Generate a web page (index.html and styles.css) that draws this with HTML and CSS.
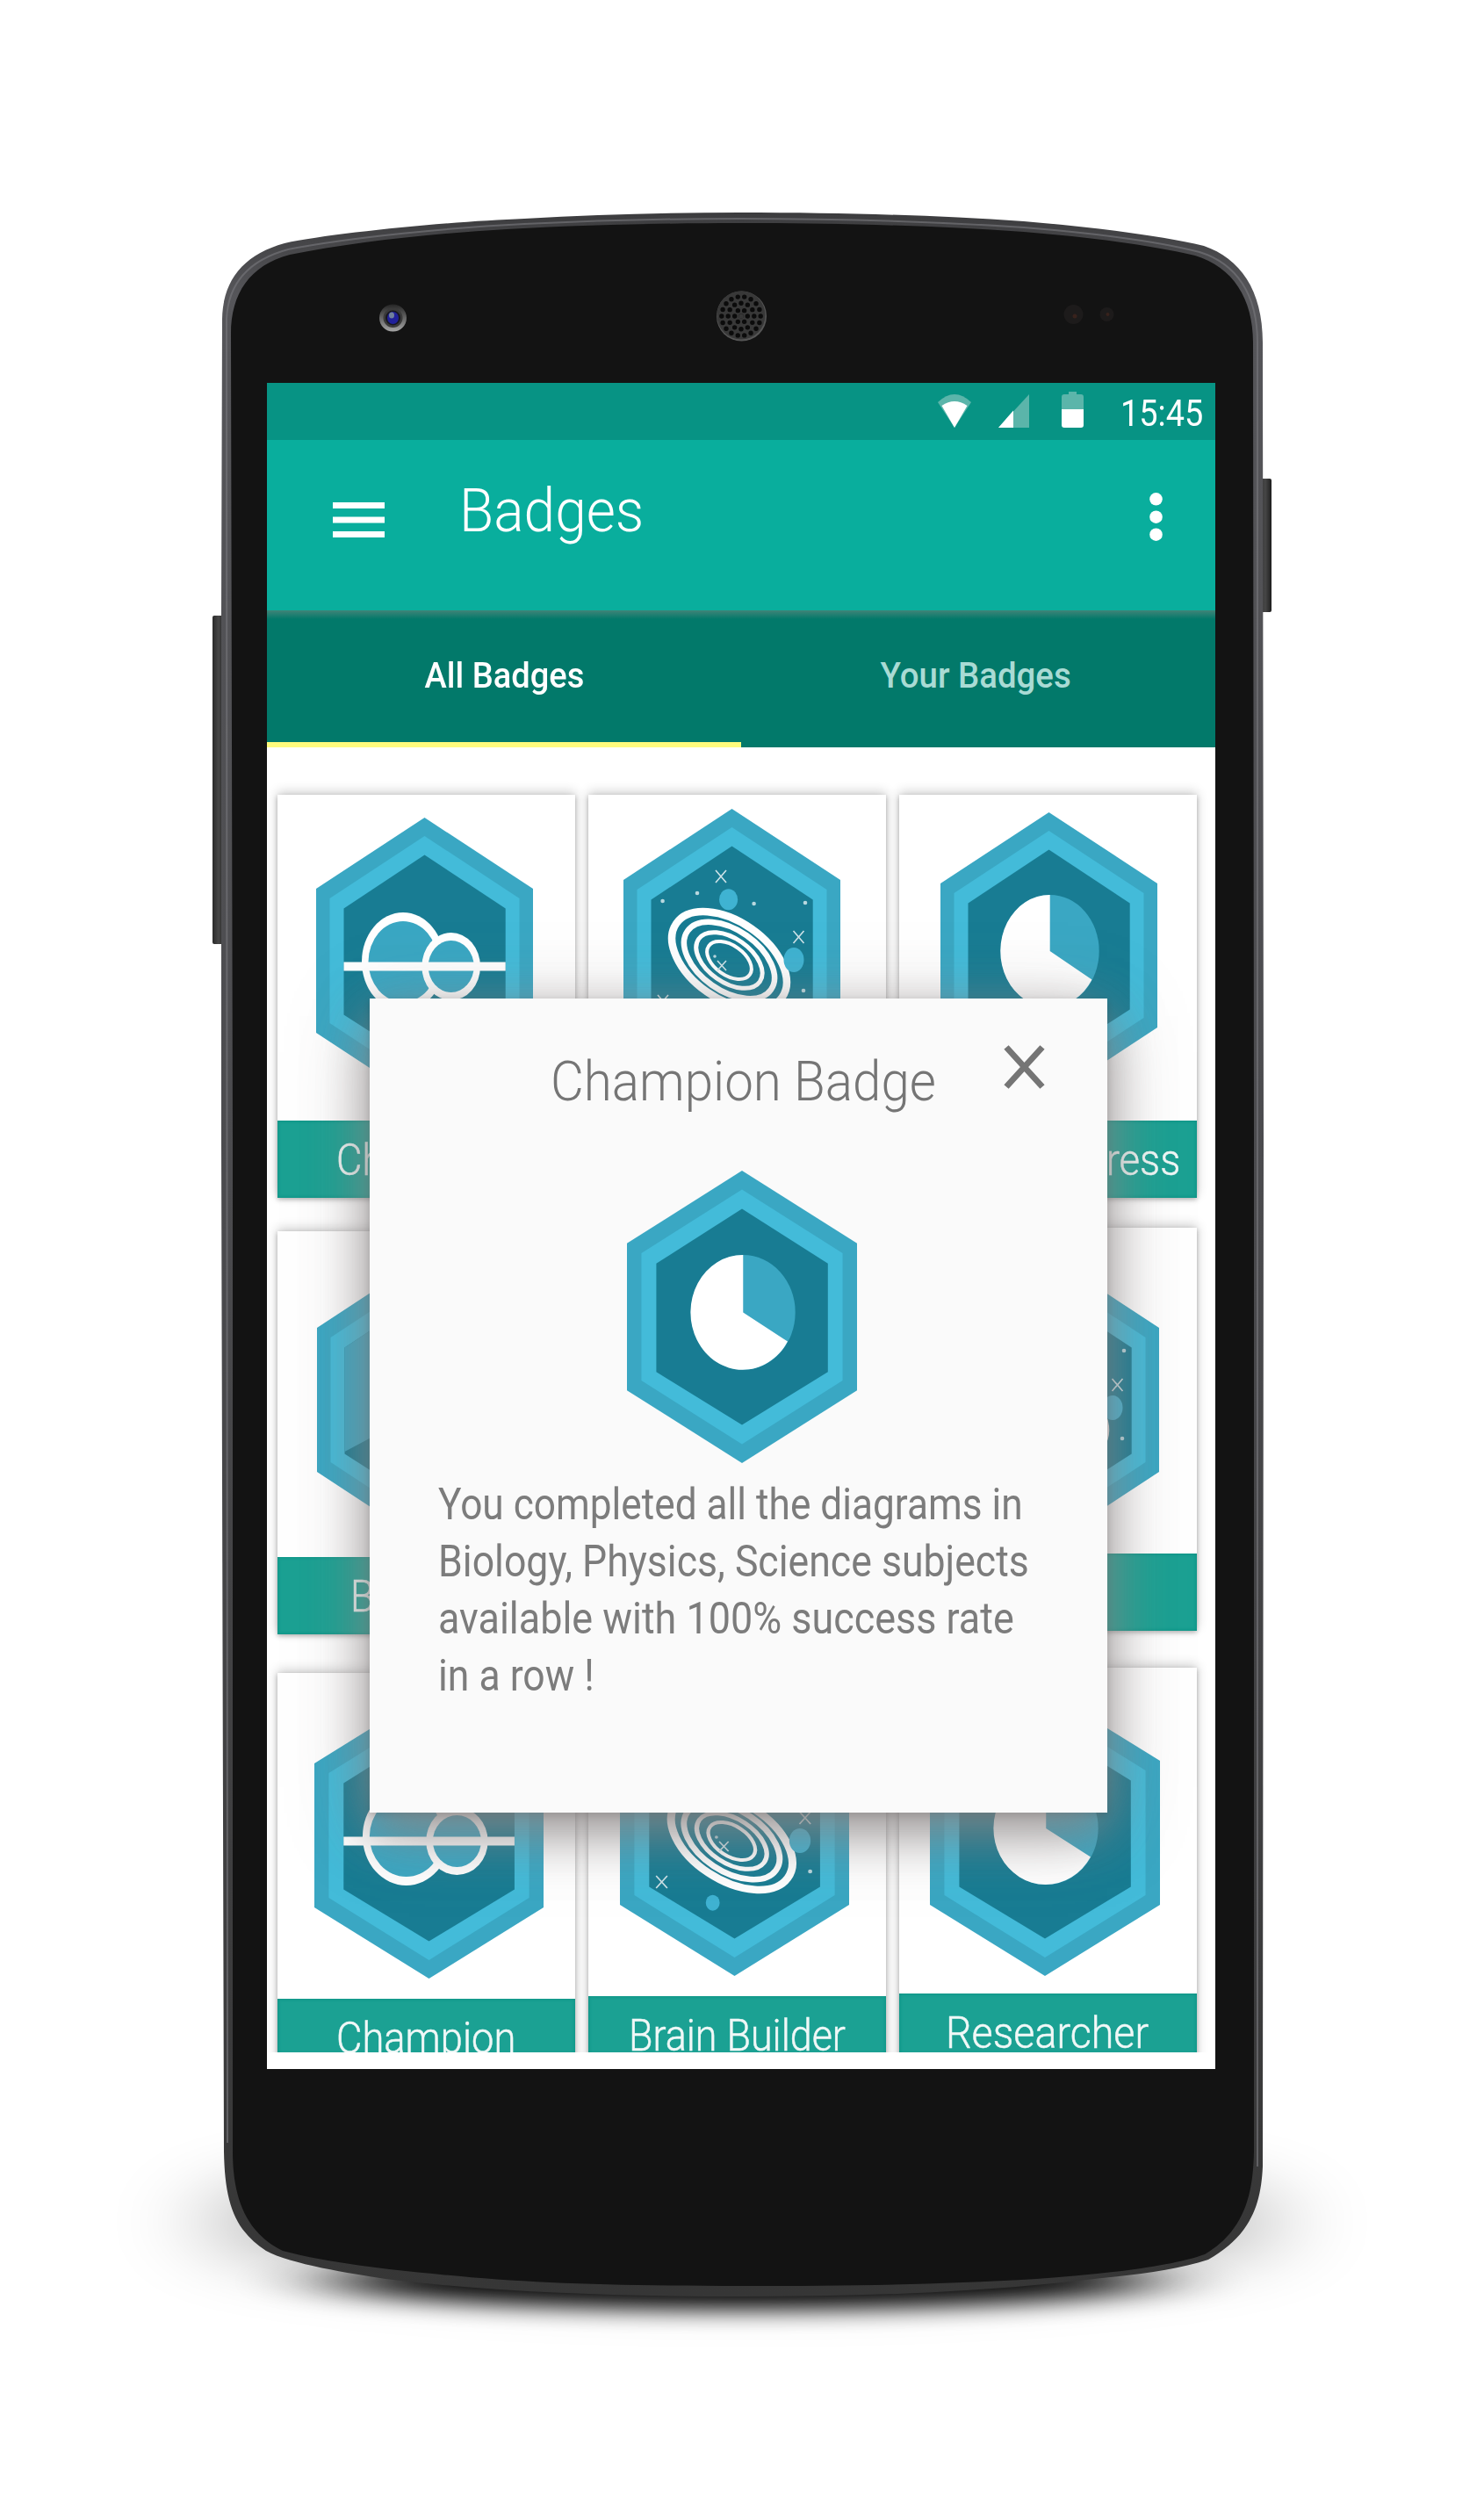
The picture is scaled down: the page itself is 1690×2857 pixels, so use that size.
FILE: index.html
```html
<!DOCTYPE html>
<html lang="en">
<head>
<meta charset="utf-8">
<title>Badges</title>
<link rel="stylesheet" href="styles.css">
</head>
<body>
<svg class="defs" width="0" height="0" aria-hidden="true">
  <defs>
    <symbol id="hex" viewBox="0 0 247 326" preserveAspectRatio="none">
      <polygon fill="#3aa7c3" points="123.5,0 247,81 247,245 123.5,326 0,245 0,81"/>
      <polygon fill="#43bbd9" points="123.5,21 231.5,92 231.5,234 123.5,305 15.5,234 15.5,92"/>
      <polygon fill="#187c93" points="123.5,42.5 215.7,103.5 215.7,224.5 123.5,283.5 31.5,224.5 31.5,103.5"/>
    </symbol>
    <symbol id="champion" viewBox="0 0 247 326" preserveAspectRatio="none">
      <use href="#hex" width="247" height="326"/>
      <ellipse cx="99" cy="164" rx="47" ry="56" fill="#fff"/>
      <ellipse cx="99" cy="164" rx="39.5" ry="46" fill="#3aa7c3"/>
      <ellipse cx="153.7" cy="169.5" rx="33.3" ry="38.5" fill="#fff"/>
      <ellipse cx="153.7" cy="169.5" rx="26" ry="29.5" fill="#3aa7c3"/>
      <rect x="31.5" y="164.5" width="184.2" height="10" fill="#fff"/>
    </symbol>
    <symbol id="galaxy" viewBox="0 0 247 326" preserveAspectRatio="none">
      <use href="#hex" width="247" height="326"/>
      <g fill="none" stroke="#fff" transform="translate(120.5 172.5) rotate(35)">
        <ellipse rx="73.5" ry="44" stroke-width="8.5"/>
        <ellipse rx="58" ry="34.5" stroke-width="6.5"/>
        <ellipse rx="42.5" ry="25" stroke-width="5"/>
        <ellipse rx="28.5" ry="17" stroke-width="4"/>
      </g>
      <g fill="#3fb3d2">
        <ellipse cx="119.6" cy="103.3" rx="10.5" ry="12"/>
        <ellipse cx="194" cy="172" rx="11.5" ry="14"/>
        <ellipse cx="100" cy="242.7" rx="7.5" ry="9"/>
      </g>
      <g stroke="#cfe3e8" stroke-width="1.6">
        <path d="M105 70l12 14M117 70l-12 14M193.500 139l12 14M205.500 139l-12 14M39 212l12 14M51 212l-12 14M107 173l10 11M117 173l-10 11"/>
      </g>
      <g fill="#b9d8df">
        <circle cx="44.600" cy="105" r="2.300"/><circle cx="84" cy="96" r="2.300"/>
        <circle cx="148.600" cy="108" r="2.300"/><circle cx="207" cy="107" r="2.300"/>
        <circle cx="205" cy="207" r="2.300"/><circle cx="104" cy="168" r="1.800"/>
      </g>
    </symbol>
    <symbol id="pie" viewBox="0 0 247 326" preserveAspectRatio="none">
      <use href="#hex" width="247" height="326"/>
      <ellipse cx="124.700" cy="158" rx="56" ry="64" fill="#3aa7c3"/>
      <path fill="#fff" d="M124.700 158V94A56 64 0 1 0 172.500 190.500Z"/>
    </symbol>
    <symbol id="peak" viewBox="0 0 247 326" preserveAspectRatio="none">
      <use href="#hex" width="247" height="326"/>
      <polygon fill="#3aa7c3" points="123.500,42.500 215.700,103.500 215.700,222 123.500,173 31.500,222 31.500,103.500"/>
    </symbol>
  </defs>
</svg>

<main class="stage">
  <svg class="device" viewBox="0 0 1690 2857" aria-hidden="true">
    <defs>
      <filter id="soft" x="-30%" y="-150%" width="160%" height="400%"><feGaussianBlur stdDeviation="55 38"/></filter>
      <filter id="tight" x="-30%" y="-100%" width="160%" height="300%"><feGaussianBlur stdDeviation="55 13"/></filter>
      <linearGradient id="rim" x1="0" y1="0" x2="0" y2="1">
        <stop offset="0" stop-color="#3c3c3e"/><stop offset=".04" stop-color="#56565a"/>
        <stop offset=".5" stop-color="#4a4a4d"/><stop offset="1" stop-color="#363636"/>
      </linearGradient>
      <linearGradient id="key" x1="0" y1="0" x2="1" y2="0">
        <stop offset="0" stop-color="#2a2a2a"/><stop offset=".5" stop-color="#474747"/><stop offset="1" stop-color="#1d1d1d"/>
      </linearGradient>
      <linearGradient id="lens" x1="0" y1="0" x2="0" y2="1">
        <stop offset="0" stop-color="#252525"/><stop offset="1" stop-color="#a5a5a5"/>
      </linearGradient>
    </defs>
    <ellipse cx="845" cy="2530" rx="620" ry="64" fill="#000" opacity=".34" filter="url(#soft)"/>
    <ellipse cx="845" cy="2598" rx="470" ry="32" fill="#000" opacity=".95" filter="url(#tight)"/>
    <rect x="242" y="701" width="14" height="374" rx="2" fill="url(#key)"/>
    <rect x="1434" y="545" width="14" height="152" rx="2" fill="url(#key)"/>
    <path fill="url(#rim)" d="M252 1300V700L253 363C254 318 278 290 324 277C380 265 516 252 597 249C680 244 760 242 842 242C960 242 1060 245 1166 252C1240 258 1320 268 1371 280C1412 294 1438 330 1438 390L1439 1300L1438 2467C1436 2510 1425 2545 1376 2573C1330 2588 1272 2592 1200 2600C1080 2612 960 2615 846 2615C700 2615 560 2610 439 2595C400 2589 330 2578 303 2563C268 2540 256 2510 255 2450Z"/>
    <path fill="none" stroke="#77777b" stroke-width="2" opacity=".65" d="M259 2440L258 363C260 322 284 296 328 284C400 270 516 259 597 255C680 251 760 249 842 249C960 249 1060 252 1166 259C1240 265 1320 275 1366 287C1408 300 1432 335 1432 390V2467"/>
    <path fill="#131313" d="M265 1300L263 380C263 335 284 302 330 290C400 276 490 266 577 261C670 256 760 254 842 254C960 254 1060 257 1166 264C1240 270 1310 279 1361 291C1404 304 1427 340 1427 390L1428 1300V2450C1427 2500 1417 2540 1372 2567C1330 2582 1250 2590 1180 2595C1060 2602 960 2603 846 2603C700 2603 600 2600 502 2590C440 2584 375 2577 322 2563C285 2545 265 2510 265 2450Z"/>
    <circle cx="447.500" cy="362" r="15.500" fill="url(#lens)"/>
    <circle cx="447.500" cy="362" r="11" fill="#3a3a3a"/>
    <circle cx="447.500" cy="362" r="8.500" fill="#171720"/>
    <ellipse cx="447.500" cy="362" rx="6.500" ry="7" fill="#20209a"/>
    <ellipse cx="446" cy="359" rx="3" ry="3.500" fill="#70809c"/>
    <circle cx="844.500" cy="360" r="28.500" fill="#555"/>
    <circle cx="844" cy="359" r="27.500" fill="#383838"/>
    <g fill="none" stroke="#0b0b0b" stroke-width="5.400" stroke-linecap="round">
      <circle cx="844" cy="360" r=".1"/>
      <circle cx="844" cy="360" r="7.300" pathLength="60" stroke-dasharray="0 10"/>
      <circle cx="844" cy="360" r="14.800" pathLength="120" stroke-dasharray="0 10"/>
      <circle cx="844" cy="360" r="22.200" pathLength="180" stroke-dasharray="0 10"/>
    </g>
    <circle cx="1222.500" cy="358" r="11" fill="#1d1b1b"/><circle cx="1224" cy="360" r="2.500" fill="#38221c"/>
    <circle cx="1260.500" cy="358" r="8" fill="#1d1b1b"/><circle cx="1261.500" cy="358" r="2" fill="#38221c"/>
  </svg>

  <div class="screen">
    <div class="status-bar">
      <svg class="wifi" viewBox="0 0 38 38"><path fill="#5bb5aa" d="M0 9Q19-9 38 9L19 38Z"/><path fill="#fff" d="M4.500 13Q19 3 33.500 13L19 38Z"/></svg>
      <svg class="signal" viewBox="0 0 35 38"><path fill="#5bb5aa" d="M35 0V38H0Z"/><path fill="#fff" d="M17 18.500V38H0Z"/></svg>
      <svg class="battery" viewBox="0 0 25 41"><path fill="#5bb5aa" d="M8 0H17V3H22Q25 3 25 6V21H0V6Q0 3 3 3H8Z"/><path fill="#fff" d="M0 20H25V38Q25 41 22 41H3Q0 41 0 38Z"/></svg>
      <span class="clock fit">15:45</span>
    </div>
    <header class="app-bar">
      <svg class="menu" viewBox="0 0 59 40"><path fill="#fff" d="M0 0H59V7H0ZM0 16.500H59V23.500H0ZM0 33H59V40H0Z"/></svg>
      <h1 class="title"><span class="fit fit-title">Badges</span></h1>
      <svg class="more" viewBox="0 0 15 55"><g fill="#fff"><circle cx="7.500" cy="7.300" r="7.300"/><circle cx="7.500" cy="27.700" r="7.300"/><circle cx="7.500" cy="47.700" r="7.300"/></g></svg>
    </header>
    <nav class="tabs">
      <a class="tab active"><span class="fit fit-all">All Badges</span></a>
      <a class="tab"><span class="fit fit-your">Your Badges</span></a>
    </nav>
    <div class="columns">
      <div class="column">
        <article class="card c11"><div class="art"><svg><use href="#champion"/></svg></div><div class="label"><span class="fit fit-champion">Ch</span></div></article>
        <article class="card c21"><div class="art"><svg><use href="#peak"/></svg></div><div class="label"><span class="fit fit-bio">B</span></div></article>
        <article class="card c31"><div class="art"><svg><use href="#champion"/></svg></div><div class="label"><span class="fit fit-champion">Champion</span></div></article>
      </div>
      <div class="column">
        <article class="card c12"><div class="art"><svg><use href="#galaxy"/></svg></div><div class="label"></div></article>
        <article class="card c22"><div class="art"></div><div class="label"></div></article>
        <article class="card c32"><div class="art"><svg><use href="#galaxy"/></svg></div><div class="label"><span class="fit fit-brain">Brain Builder</span></div></article>
      </div>
      <div class="column">
        <article class="card c13"><div class="art"><svg><use href="#pie"/></svg></div><div class="label"><span class="fit fit-progress">Progress</span></div></article>
        <article class="card c23"><div class="art"><svg><use href="#galaxy"/></svg></div><div class="label"></div></article>
        <article class="card c33"><div class="art"><svg><use href="#pie"/></svg></div><div class="label"><span class="fit fit-researcher">Researcher</span></div></article>
      </div>
    </div>

    <section class="dialog">
      <svg class="close" viewBox="0 0 47 50"><path d="M3 2.500L44 47.500M44 2.500L3 47.500" stroke="#757575" stroke-width="7" fill="none"/></svg>
      <h2 class="dialog-title"><span class="fit fit-dialog">Champion Badge</span></h2>
      <svg class="dialog-badge"><use href="#pie"/></svg>
      <p class="dialog-text"><span class="fit fit-line1">You completed all the diagrams in</span><br><span class="fit fit-line2">Biology, Physics, Science subjects</span><br><span class="fit fit-line3">available with 100% success rate</span><br><span class="fit fit-line4">in a row !</span></p>
    </section>
  </div>
</main>
</body>
</html>
```
FILE: styles.css
```css
* { box-sizing: border-box; }
body { margin: 0; background: #fff; font-family: Roboto, "Liberation Sans", sans-serif; }
.defs { position: absolute; }
.stage { position: relative; width: 1690px; height: 2857px; padding: 436px 306px 0 304px; overflow: hidden; }
.device { position: absolute; left: 0; top: 0; width: 1690px; height: 2857px; }
.screen { position: relative; width: 1080px; height: 1920px; background: #fff; overflow: hidden; }

/* Slightly condensed lettering */
.fit { display: inline-block; transform-origin: 0 50%; white-space: nowrap; }
.fit-title { transform: scaleX(.928); }
.fit-all { transform: scaleX(.952); transform-origin: 50% 50%; }
.fit-your { transform: translateX(-3px) scaleX(.96); transform-origin: 50% 50%; }
.fit-champion { margin-left: 67px; transform: scaleX(.906); }
.fit-bio { margin-left: 83px; transform: scaleX(.9); }
.fit-brain { margin-left: 46px; transform: scaleX(.897); }
.fit-progress { margin-left: 142px; transform: scaleX(.91); }
.fit-researcher { margin-left: 53px; transform: scaleX(.932); }
.fit-dialog { transform: scaleX(.925); }
.fit-line1 { transform: scaleX(.884); }
.fit-line2 { transform: scaleX(.892); }
.fit-line3 { transform: scaleX(.898); }
.fit-line4 { transform: scaleX(.89); }

.status-bar { display: flex; align-items: flex-start; height: 65px; padding-left: 764px; background: #079384; color: #fff; }
.wifi { width: 38px; height: 38px; margin-top: 13px; }
.signal { width: 35px; height: 38px; margin: 13px 0 0 31px; }
.battery { width: 25px; height: 41px; margin: 10px 0 0 37px; }
.clock { margin: 10px 0 0 42px; font-size: 42px; line-height: 49px; transform: scaleX(.9); }

.app-bar { display: flex; align-items: flex-start; height: 194px; background: #09ae9d; color: #fff; }
.menu { width: 59px; height: 40px; margin: 71px 0 0 75px; }
.title { margin: 40px 0 0 85px; width: 700px; font-size: 69px; line-height: 81px; font-weight: 300; }
.more { width: 15px; height: 55px; margin: 60px 0 0 86px; }

.tabs { display: flex; height: 156px; background: linear-gradient(#408478, #02796a 10px); }
.tab { width: 540px; height: 156px; padding-top: 51px; text-align: center; font-size: 40px; line-height: 47px; font-weight: 500; color: #a9dbd4; }
.tab.active { color: #fff; border-bottom: 6px solid #fffb7d; }

.columns { display: flex; gap: 15px; height: 1486px; padding: 54px 21px 0 12px; overflow: hidden; }
.column { width: 339px; }
.card { height: 459px; background: #fff; box-shadow: 0 -3px 12px rgba(0,0,0,.2), 0 2px 5px rgba(0,0,0,.25); }
.art { height: 371px; overflow: hidden; }
.art svg { display: block; width: 247px; height: 326px; }
.label { height: 88px; padding-top: 16px; background: #1ba193; box-shadow: inset 0 0 4px #078f80; color: #f0f8f7; font-size: 50px; line-height: 58px; font-weight: 300; -webkit-text-stroke: .5px #f0f8f7; }

.c11 svg { margin: 26px 0 0 44px; }
.c21 { margin-top: 38px; }
.c21 svg { margin: 29px 0 0 45px; }
.c31 { margin-top: 44px; }
.c31 svg { margin: 22px 0 0 42px; width: 261px; }
.c12 svg { margin: 16px 0 0 40px; }
.c22 { margin-top: 36px; }
.c32 { margin-top: 43px; }
.c32 svg { margin: 22px 0 0 36px; width: 261px; }
.c13 svg { margin: 20px 0 0 47px; }
.c23 { margin-top: 34px; }
.c23 svg { margin: 33px 0 0 49px; }
.c33 { margin-top: 42px; }
.c33 svg { margin: 25px 0 0 35px; width: 262px; }

.dialog { position: absolute; left: 117px; top: 701px; width: 840px; height: 927px; background: #fafafa; color: #757575; box-shadow: 0 20px 54px rgba(135,130,130,.85), 0 16px 90px rgba(135,130,130,.3), 0 3px 8px rgba(0,0,0,.2); }
.close { position: absolute; left: 722px; top: 53px; width: 47px; height: 50px; }
.dialog-title { margin: 58px 0 0 206px; font-size: 63px; line-height: 74px; font-weight: 300; }
.dialog-badge { display: block; width: 262px; height: 333px; margin: 64px 0 0 293px; }
.dialog-text { margin: 15px 0 0 78px; font-size: 50px; line-height: 65px; font-weight: 400; color: #7c7c7c; }
```
